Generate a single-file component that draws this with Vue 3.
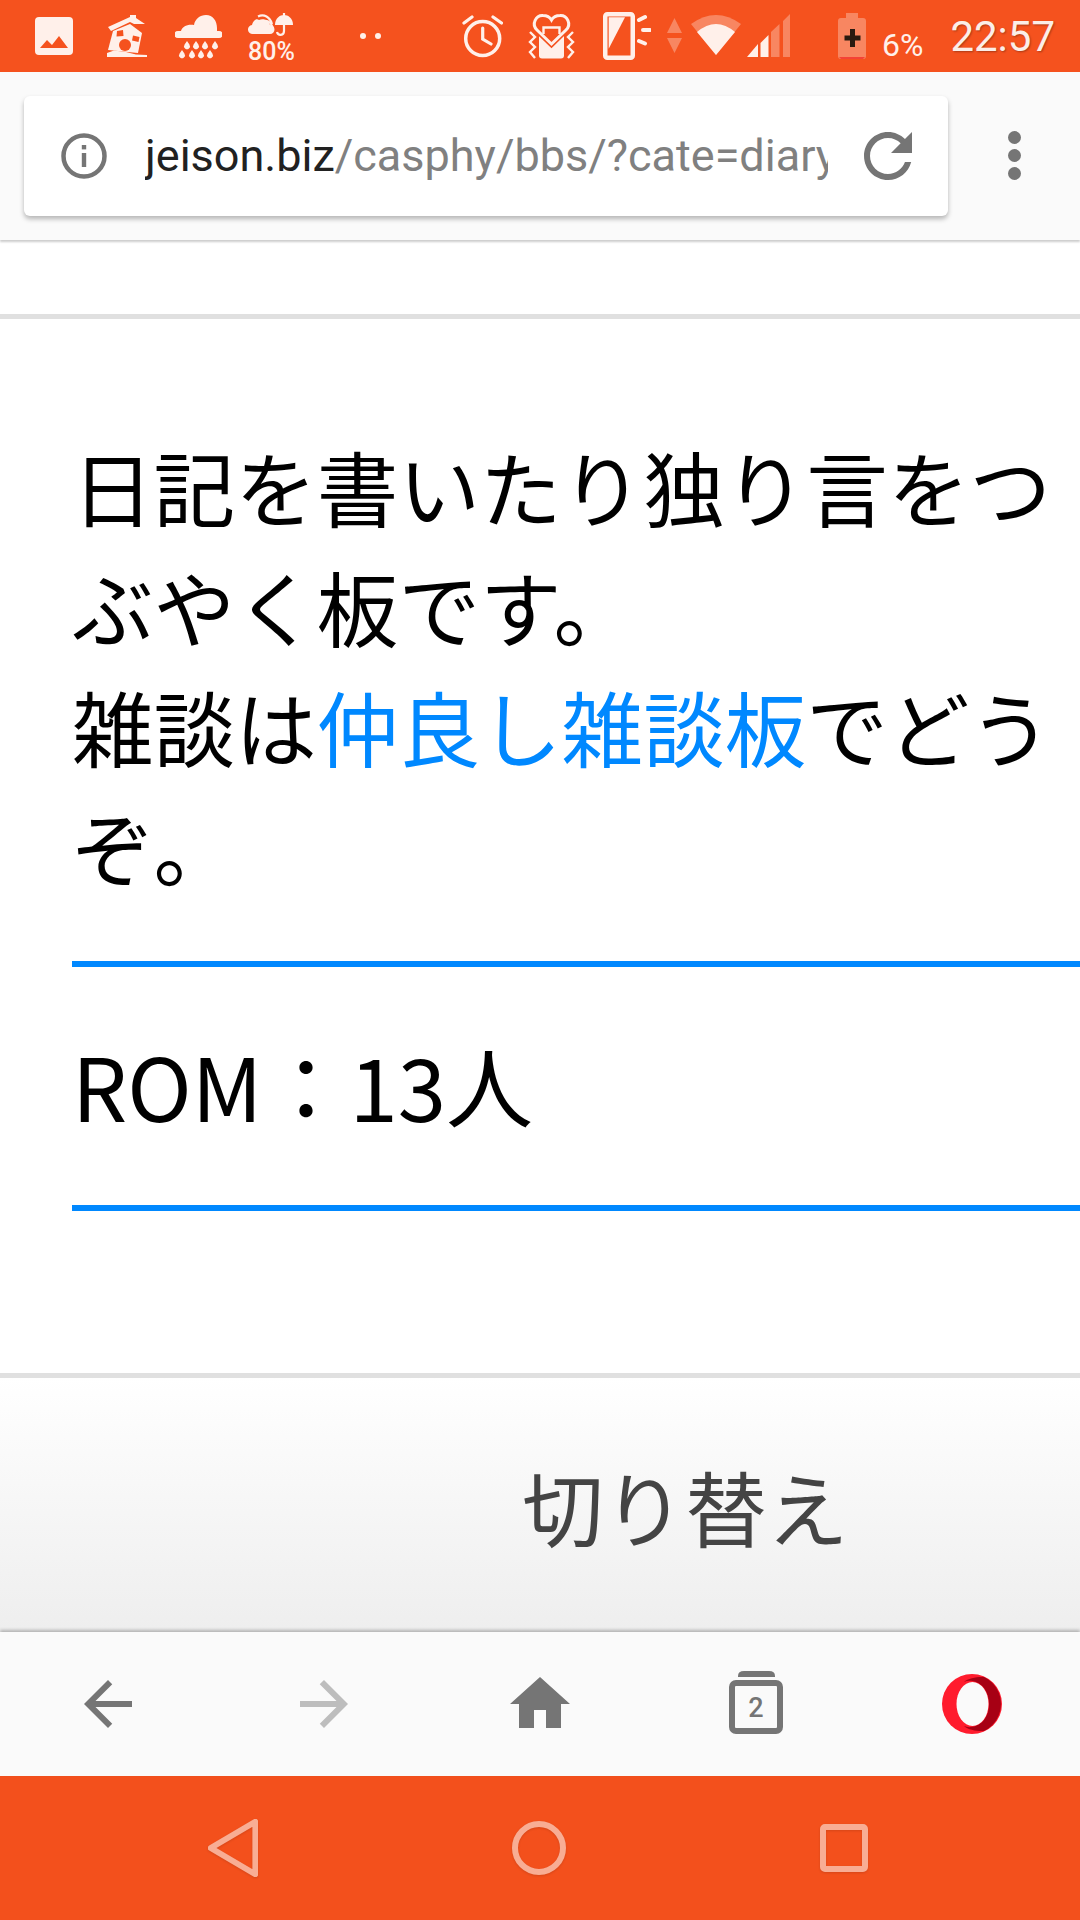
<template>
  <div class="screen">
    <header class="status">
      <svg class="si s-pic" width="38" height="72" viewBox="0 0 38 72"><rect y="17" width="38" height="38" rx="4" class="w"/><path d="M5 48 12 40 17 45 24 36 33 48Z" class="o"/></svg>
      <svg class="si s-house" width="41" height="72" viewBox="0 0 41 72"><path d="M2 27 24 17V15H30V18L39 24H28L24 22 5 31Z" class="w"/><path d="M7 31 24 24 36 33 32 53 2 50Z" class="w"/><path d="M11 31 17 30 17.500 36 10.500 36.500ZM27 35.500 33.500 37 32.500 42 26 40.500Z" class="o"/><circle cx="19" cy="45" r="6" class="o"/><path d="M1 57V53L8 50.500 20 52 30 54.500 41 55V57Z" class="w"/></svg>
      <svg class="si s-rain" width="47" height="72" viewBox="0 0 47 72"><path d="M3 38A3.500 3.500 0 0 1 3 31H6C7 27 12 24 19 25 20 19 25 15 31 15 38 15 42 21 42 28V31H44A3.500 3.500 0 0 1 44 38Z" class="w"/><g class="w"><path v-for="d in drops" :key="d.x" :d="`M${d.x} ${d.y}l2.400 3.600a2.900 2.900 0 1 1-4.800 0Z`"/></g></svg>
      <svg class="si s-wea" width="46" height="72" viewBox="0 0 46 72"><path d="M5 34A4.500 4.500 0 0 1 4 25C5 21 8 18 11 20 16 18 21 21 22 25A4.500 4.500 0 0 1 22 34Z" class="w"/><path d="M10 16.500C16 13.500 22 17 24 24" class="ln" stroke-width="2.200"/><path d="M15 21C19 20 23 22 25 28" class="ln" stroke-width="2"/><path d="M27 25C27 18 32 15 36 15 40 15 45 18 45 25Z" class="w"/><path d="M36 13V31C36 36 30 36 29 32" class="ln" stroke-width="2.200"/><text x="0" y="60" class="t80">80%</text></svg>
      <svg class="si s-dots" width="21" height="72" viewBox="0 0 21 72"><circle cx="3" cy="36" r="3" class="w"/><circle cx="18" cy="36" r="3" class="w"/></svg>
      <svg class="si s-alarm" width="41" height="72" viewBox="0 0 41 72"><circle cx="20.700" cy="38.500" r="17" class="ln" stroke-width="3.500"/><path d="M2 23 10 17M31 17 39.500 23M20.700 28V39L29 44" class="ln" stroke-width="3.200" stroke-linecap="round"/></svg>
      <svg class="si s-heart" width="47" height="72" viewBox="0 0 47 72"><rect x="11" y="26" width="25" height="32.500" rx="3" class="w"/><path d="M23.500 44 9 30C3 24 8 15 15 15.500 19 15.500 22 17.500 23.500 20 25 17.500 28 15.500 32 15.500 39 15 44 24 38 30Z" class="o halo"/><path d="M23.500 44 9 30C3 24 8 15 15 15.500 19 15.500 22 17.500 23.500 20 25 17.500 28 15.500 32 15.500 39 15 44 24 38 30Z" class="ln" stroke-width="3"/><path d="M15.500 34V27.500H31.500V34" class="ln" stroke-width="2.400"/><path d="M2 32 7 37 2 42 7 47 2 52 7 58M45 32 40 37 45 42 40 47 45 52 40 58" class="ln" stroke-width="2.400"/></svg>
      <svg class="si s-rot" width="48" height="72" viewBox="0 0 48 72"><rect x="2.250" y="14.250" width="27.500" height="43.500" rx="2" class="ln" stroke-width="4.500"/><path d="M5.700 17.300H22L5.700 48.700Z" class="w"/><path d="M36 20 42 17M40 30H47M36 41 42 43.500" class="ln" stroke-width="4" stroke-linecap="round"/></svg>
      <svg class="si s-ud" width="15" height="72" viewBox="0 0 15 72"><path d="M0 33H15L7.500 18ZM0 38H15L7.500 53Z" class="a"/></svg>
      <svg class="si s-wifi" width="52" height="72" viewBox="0 0 52 72"><path d="M1 24Q26 6 51 24L26 55Z" class="a"/><path d="M7 32Q26 16 45 32L26 55Z" class="w"/></svg>
      <svg class="si s-sig" width="43" height="72" viewBox="0 0 43 72"><path d="M0 57H11V44Z" class="w"/><path d="M13.500 57H21.500V35L13.500 43Z" class="w"/><path d="M24 57H32.500V24L24 32ZM36 57H43V14L36 21Z" class="a"/></svg>
      <svg class="si s-bat" width="28" height="72" viewBox="0 0 28 72"><path d="M8 13H20V18H8Z" class="a"/><rect y="18" width="28" height="41" rx="3" class="a"/><path d="M1 57H27L25 59H3Z" fill="#f44336"/><path d="M14.500 29V47M6.500 38H22.500" stroke="#2a1a10" stroke-width="5"/></svg>
      <span class="pct">6%</span>
      <span class="clock">22:57</span>
    </header>

    <div class="toolbar">
      <div class="omnibox">
        <svg class="info" width="48" height="48" viewBox="0 0 48 48"><circle cx="24" cy="24" r="20.500" fill="none" stroke="#757575" stroke-width="4.500"/><rect x="21.800" y="21" width="4.400" height="14" fill="#757575"/><rect x="21.800" y="13" width="4.400" height="4.400" fill="#757575"/></svg>
        <div class="url"><span class="host">jeison.biz</span>/casphy/bbs/?cate=diary</div>
        <svg class="reload" width="72" height="72" viewBox="0 0 24 24"><path fill="#757575" d="M17.650 6.350C16.200 4.900 14.210 4 12 4c-4.420 0-7.990 3.580-7.990 8s3.570 8 7.990 8c3.730 0 6.840-2.550 7.730-6h-2.080c-.82 2.330-3.040 4-5.650 4-3.310 0-6-2.690-6-6s2.690-6 6-6c1.660 0 3.140.69 4.220 1.780L13 11h7V4l-2.350 2.350z"/></svg>
      </div>
      <div class="kebab"><i></i><i></i><i></i></div>
    </div>

    <div class="gap"></div>

    <main class="page">
      <p class="lead">日記を書いたり独り言をつぶやく板です。<br>雑談は<a class="lnk">仲良し雑談板</a>でどうぞ。</p>
      <div class="rom">ROM：13人</div>
    </main>

    <div class="switch"><span>切り替え</span></div>

    <nav class="bottom">
      <svg width="72" height="72" viewBox="0 0 24 24"><path fill="#757575" d="M20 11H7.830l5.590-5.590L12 4l-8 8 8 8 1.410-1.410L7.830 13H20v-2z"/></svg>
      <svg width="72" height="72" viewBox="0 0 24 24"><path fill="#bdbdbd" d="M4 11h12.170l-5.590-5.590L12 4l8 8-8 8-1.410-1.410L16.170 13H4v-2z"/></svg>
      <svg width="72" height="72" viewBox="0 0 24 24"><path fill="#757575" d="M10 20v-6h4v6h5v-8h3L12 3 2 12h3v8z"/></svg>
      <svg width="72" height="72" viewBox="0 0 72 72"><path d="M18 9V8Q18 3 24 3H49Q55 3 55 8V9Z" fill="#757575"/><rect x="12" y="15" width="48" height="48" rx="4" fill="none" stroke="#757575" stroke-width="6"/><text x="36" y="49" class="tabn">2</text></svg>
      <svg width="60" height="60" viewBox="0 0 60 60"><circle cx="30" cy="30" r="30" fill="#ff1b2d"/><path d="M22 8C26 4 36 2.500 42 3A30 30 0 0 1 42 57C36 57.500 26 56 22 52 30 56 47 50 47 30 47 10 30 4 22 8Z" fill="#a70014"/><ellipse cx="30.500" cy="30" rx="16" ry="22" fill="#fafafa"/></svg>
    </nav>

    <footer class="nav">
      <svg class="nic" width="50" height="58" viewBox="0 0 50 58"><path d="M47.300 2.700V55.300L2.700 29Z" class="nv" stroke-width="5.800"/></svg>
      <svg class="nic" width="54" height="54" viewBox="0 0 54 54"><circle cx="27" cy="27" r="24" class="nv" stroke-width="6"/></svg>
      <svg class="nic" width="48" height="48" viewBox="0 0 48 48"><rect x="3" y="3" width="42" height="42" rx="2" class="nv" stroke-width="6"/></svg>
    </footer>
  </div>
</template>

<script setup>
const drops = [
  { x: 12, y: 41 }, { x: 21, y: 41 }, { x: 30, y: 41 }, { x: 40, y: 41 },
  { x: 7, y: 50 }, { x: 17, y: 50 }, { x: 26, y: 50 }, { x: 35, y: 50 }
]
</script>

<style>
html, body { margin: 0; padding: 0; background: #fff; }
</style>

<style scoped>
.screen {
  width: 1080px;
  height: 1920px;
  display: flex;
  flex-direction: column;
  overflow: hidden;
  background: #fff;
  font-family: "Noto Sans CJK JP", "Noto Sans", sans-serif;
}
.status {
  height: 72px;
  flex: none;
  display: flex;
  align-items: flex-start;
  background: #f5521e;
  padding-left: 35px;
  box-sizing: border-box;
}
.si { flex: none; display: block; }
.w { fill: #fff0ea; }
.o { fill: #f5521e; }
.halo { stroke: #f5521e; stroke-width: 6px; }
.a { fill: rgba(255, 255, 255, 0.3); }
.ln { fill: none; stroke: #fff0ea; }
.t80 { font: 500 25px Roboto, sans-serif; fill: #fff0ea; }
.s-house { margin-left: 33px; }
.s-rain { margin-left: 28px; }
.s-wea { margin-left: 26px; }
.s-dots { margin-left: 66px; }
.s-alarm { margin-left: 81px; }
.s-heart { margin-left: 25px; }
.s-rot { margin-left: 28px; }
.s-ud { margin-left: 16px; }
.s-wifi { margin-left: 8px; }
.s-sig { margin-left: 5px; }
.s-bat { margin-left: 48px; }
.pct {
  margin-left: 16px;
  margin-top: 27px;
  font: 400 32px/36px Roboto, sans-serif;
  color: #fff0ea;
}
.clock {
  margin-left: auto;
  margin-right: 25px;
  margin-top: 12px;
  font: 400 42px/50px Roboto, sans-serif;
  color: #fbeee8;
  text-shadow: 1px 1px 2px rgba(0, 0, 0, 0.3);
}
.toolbar {
  height: 168px;
  flex: none;
  box-sizing: border-box;
  background: #fafafa;
  display: flex;
  align-items: flex-start;
  padding: 24px 0 0 24px;
  box-shadow: 0 2px 2px rgba(0, 0, 0, 0.2);
  position: relative;
}
.omnibox {
  width: 924px;
  height: 120px;
  background: #fff;
  border-radius: 6px;
  box-shadow: 0 3px 5px rgba(0, 0, 0, 0.28);
  display: flex;
  align-items: center;
  padding-left: 36px;
  box-sizing: border-box;
}
.info { flex: none; }
.url {
  margin-left: 37px;
  width: 683px;
  flex: none;
  overflow: hidden;
  white-space: nowrap;
  font: 400 45px/60px Roboto, sans-serif;
  color: #808080;
}
.host { color: #212121; }
.reload { flex: none; margin-left: 24px; }
.kebab {
  margin-left: 60px;
  margin-top: 35px;
  display: flex;
  flex-direction: column;
  gap: 5px;
}
.kebab i {
  display: block;
  width: 13px;
  height: 13px;
  border-radius: 50%;
  background: #757575;
}
.gap {
  height: 74px;
  flex: none;
  border-bottom: 5px solid #e0e0e0;
}
.page {
  flex: 1;
  padding: 107px 0 0 72px;
  box-sizing: border-box;
  color: #000;
}
.lead {
  margin: 0 0 55px;
  font-size: 81.6px;
  line-height: 120px;
}
.lnk { color: #0088ff; }
.rom {
  border-top: 6px solid #0088ff;
  border-bottom: 6px solid #0088ff;
  height: 238px;
  font-size: 87px;
  line-height: 234px;
}
.switch {
  height: 259px;
  flex: none;
  box-sizing: border-box;
  border-top: 5px solid #e0e0e0;
  background: linear-gradient(#fff, #eee);
  padding-left: 522px;
  font-size: 81.6px;
  line-height: 256px;
  color: #444;
}
.bottom {
  height: 144px;
  flex: none;
  display: grid;
  grid-template-columns: repeat(5, 216px);
  align-items: center;
  justify-items: center;
  background: #fafafa;
  box-shadow: 0 -2px 3px rgba(0, 0, 0, 0.25);
  position: relative;
}
.tabn {
  font: 500 27px Roboto, sans-serif;
  fill: #757575;
  text-anchor: middle;
}
.nav {
  height: 144px;
  flex: none;
  background: #f3501c;
  display: flex;
  align-items: center;
  justify-content: space-between;
  padding: 0 212px 0 208px;
  box-sizing: border-box;
}
.nic { filter: drop-shadow(0 1px 1px rgba(0, 0, 0, 0.12)); }
.nv {
  fill: none;
  stroke: #f8ad94;
  stroke-linejoin: round;
}
</style>
